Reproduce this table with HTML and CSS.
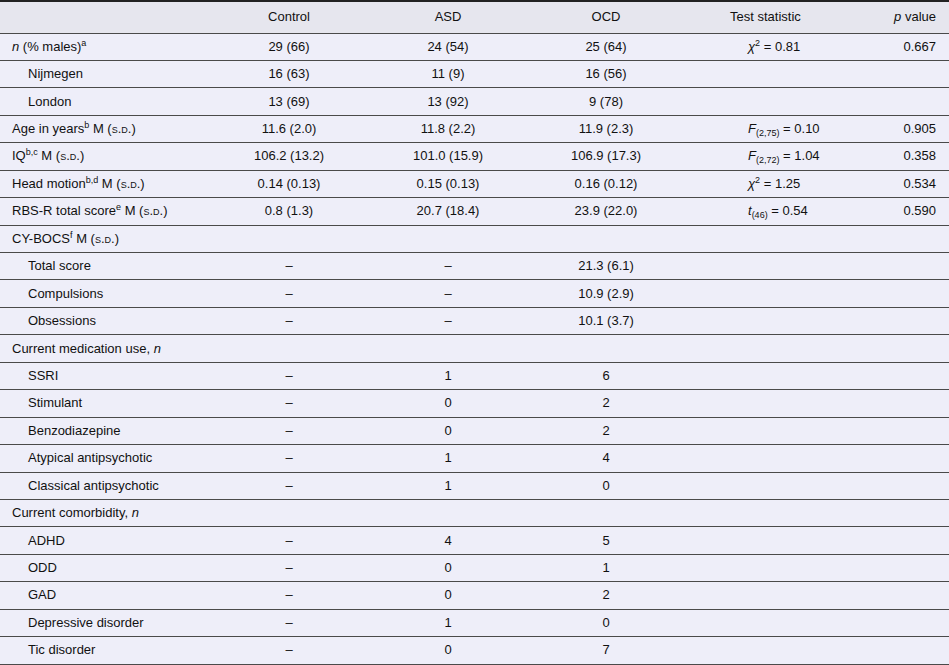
FILE: index.html
```html
<!DOCTYPE html>
<html>
<head>
<meta charset="utf-8">
<link rel="stylesheet" href="styles.css">
</head>
<body>
<table class="tbl">
  <colgroup>
    <col class="c-label"><col class="c-ctl"><col class="c-asd"><col class="c-ocd"><col class="c-test"><col class="c-p">
  </colgroup>
  <thead>
    <tr class="hrow">
      <th class="lab"></th>
      <th class="num">Control</th>
      <th class="num">ASD</th>
      <th class="num">OCD</th>
      <th class="test-h">Test statistic</th>
      <th class="pv"><i>p</i> value</th>
    </tr>
  </thead>
  <tbody>
    <tr><td class="lab"><i>n</i> (% males)<sup>a</sup></td><td class="num">29 (66)</td><td class="num">24 (54)</td><td class="num">25 (64)</td><td class="test"><i>χ</i><sup>2</sup> = 0.81</td><td class="pv">0.667</td></tr>
    <tr><td class="lab sub">Nijmegen</td><td class="num">16 (63)</td><td class="num">11 (9)</td><td class="num">16 (56)</td><td class="test"></td><td class="pv"></td></tr>
    <tr><td class="lab sub">London</td><td class="num">13 (69)</td><td class="num">13 (92)</td><td class="num">9 (78)</td><td class="test"></td><td class="pv"></td></tr>
    <tr><td class="lab">Age in years<sup>b</sup> M (<span class="sc">s.d.</span>)</td><td class="num">11.6 (2.0)</td><td class="num">11.8 (2.2)</td><td class="num">11.9 (2.3)</td><td class="test"><i>F</i><sub>(2,75)</sub> = 0.10</td><td class="pv">0.905</td></tr>
    <tr><td class="lab">IQ<sup>b,c</sup> M (<span class="sc">s.d.</span>)</td><td class="num">106.2 (13.2)</td><td class="num">101.0 (15.9)</td><td class="num">106.9 (17.3)</td><td class="test"><i>F</i><sub>(2,72)</sub> = 1.04</td><td class="pv">0.358</td></tr>
    <tr><td class="lab">Head motion<sup>b,d</sup> M (<span class="sc">s.d.</span>)</td><td class="num">0.14 (0.13)</td><td class="num">0.15 (0.13)</td><td class="num">0.16 (0.12)</td><td class="test"><i>χ</i><sup>2</sup> = 1.25</td><td class="pv">0.534</td></tr>
    <tr><td class="lab">RBS-R total score<sup>e</sup> M (<span class="sc">s.d.</span>)</td><td class="num">0.8 (1.3)</td><td class="num">20.7 (18.4)</td><td class="num">23.9 (22.0)</td><td class="test"><i>t</i><sub>(46)</sub> = 0.54</td><td class="pv">0.590</td></tr>
    <tr><td class="lab">CY-BOCS<sup>f</sup> M (<span class="sc">s.d.</span>)</td><td class="num"></td><td class="num"></td><td class="num"></td><td class="test"></td><td class="pv"></td></tr>
    <tr><td class="lab sub">Total score</td><td class="num">–</td><td class="num">–</td><td class="num">21.3 (6.1)</td><td class="test"></td><td class="pv"></td></tr>
    <tr><td class="lab sub">Compulsions</td><td class="num">–</td><td class="num">–</td><td class="num">10.9 (2.9)</td><td class="test"></td><td class="pv"></td></tr>
    <tr><td class="lab sub">Obsessions</td><td class="num">–</td><td class="num">–</td><td class="num">10.1 (3.7)</td><td class="test"></td><td class="pv"></td></tr>
    <tr><td class="lab">Current medication use, <i>n</i></td><td class="num"></td><td class="num"></td><td class="num"></td><td class="test"></td><td class="pv"></td></tr>
    <tr><td class="lab sub">SSRI</td><td class="num">–</td><td class="num">1</td><td class="num">6</td><td class="test"></td><td class="pv"></td></tr>
    <tr><td class="lab sub">Stimulant</td><td class="num">–</td><td class="num">0</td><td class="num">2</td><td class="test"></td><td class="pv"></td></tr>
    <tr><td class="lab sub">Benzodiazepine</td><td class="num">–</td><td class="num">0</td><td class="num">2</td><td class="test"></td><td class="pv"></td></tr>
    <tr><td class="lab sub">Atypical antipsychotic</td><td class="num">–</td><td class="num">1</td><td class="num">4</td><td class="test"></td><td class="pv"></td></tr>
    <tr><td class="lab sub">Classical antipsychotic</td><td class="num">–</td><td class="num">1</td><td class="num">0</td><td class="test"></td><td class="pv"></td></tr>
    <tr><td class="lab">Current comorbidity, <i>n</i></td><td class="num"></td><td class="num"></td><td class="num"></td><td class="test"></td><td class="pv"></td></tr>
    <tr><td class="lab sub">ADHD</td><td class="num">–</td><td class="num">4</td><td class="num">5</td><td class="test"></td><td class="pv"></td></tr>
    <tr><td class="lab sub">ODD</td><td class="num">–</td><td class="num">0</td><td class="num">1</td><td class="test"></td><td class="pv"></td></tr>
    <tr><td class="lab sub">GAD</td><td class="num">–</td><td class="num">0</td><td class="num">2</td><td class="test"></td><td class="pv"></td></tr>
    <tr><td class="lab sub">Depressive disorder</td><td class="num">–</td><td class="num">1</td><td class="num">0</td><td class="test"></td><td class="pv"></td></tr>
    <tr><td class="lab sub">Tic disorder</td><td class="num">–</td><td class="num">0</td><td class="num">7</td><td class="test"></td><td class="pv"></td></tr>
  </tbody>
</table>
</body>
</html>
```
FILE: styles.css
```css
html, body {
  margin: 0;
  padding: 0;
  background: #eeeef9;
}
.tbl {
  width: 949px;
  border-collapse: collapse;
  table-layout: fixed;
  font-family: "Liberation Sans", Arial, sans-serif;
  font-size: 13px;
  color: #111;
  border-top: 2px solid #222;
}
.c-label { width: 210px; }
.c-ctl { width: 158px; }
.c-asd { width: 160px; }
.c-ocd { width: 156px; }
.c-test { width: 178px; }
.c-p { width: 87px; }

.hrow {
  height: 32px;
  background: #e6e6ee;
}
.hrow th {
  font-weight: normal;
}
tbody tr {
  height: 27.45px;
}
th, td {
  padding: 0;
  border-bottom: 1px solid #4a4a4a;
  white-space: nowrap;
  line-height: 16px;
  vertical-align: middle;
}
.lab {
  text-align: left;
  padding-left: 12px;
}
.lab.sub {
  padding-left: 28px;
}
.num {
  text-align: center;
}
.test-h {
  text-align: left;
  padding-left: 46px;
}
.test {
  text-align: left;
  padding-left: 64px;
}
.pv {
  text-align: right;
  padding-right: 13px;
}
sup {
  font-size: 9px;
  line-height: 0;
  vertical-align: 5px;
}
sub {
  font-size: 9px;
  line-height: 0;
  vertical-align: -3px;
}
.sc {
  font-variant: small-caps;
  font-size: 13px;
}
```
